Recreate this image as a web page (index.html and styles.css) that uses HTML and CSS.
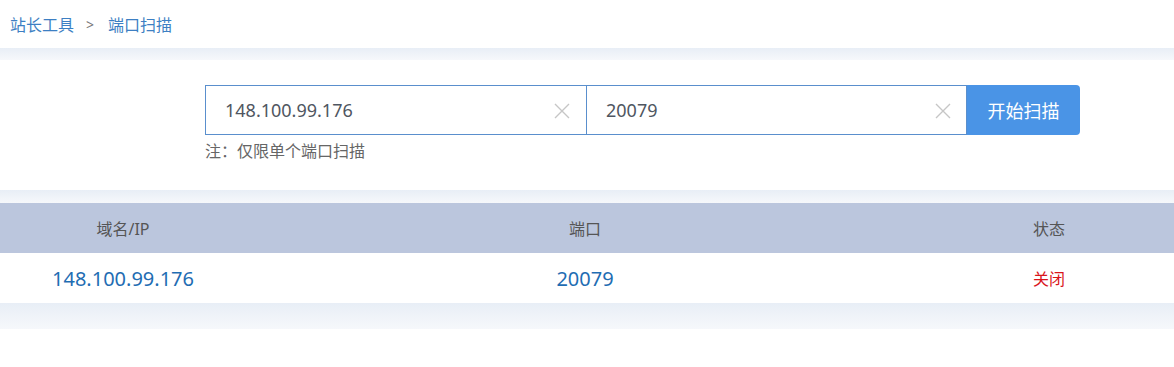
FILE: index.html
```html
<!DOCTYPE html>
<html>
<head>
  <meta charset="utf-8">
  <title>端口扫描</title>
  <link rel="stylesheet" href="styles.css">
</head>
<body>
  <div class="crumb">
    <a href="#">站长工具</a>
    <span class="sep">&gt;</span>
    <a href="#">端口扫描</a>
  </div>
  <div class="band band-top"></div>

  <section class="scan">
    <form class="scan-form">
      <div class="field">
        <input type="text" value="148.100.99.176">
        <svg class="clear" width="16" height="16" viewBox="0 0 16 16"><path d="M1 1L15 15M15 1L1 15"/></svg>
      </div>
      <div class="field field-port">
        <input type="text" value="20079">
        <svg class="clear" width="16" height="16" viewBox="0 0 16 16"><path d="M1 1L15 15M15 1L1 15"/></svg>
      </div>
      <button type="button">开始扫描</button>
    </form>
    <p class="note">注：仅限单个端口扫描</p>
  </section>
  <div class="band band-mid"></div>

  <div class="result">
    <div class="result-head">
      <div>域名/IP</div>
      <div>端口</div>
      <div>状态</div>
    </div>
    <div class="result-row">
      <div class="val">148.100.99.176</div>
      <div class="val">20079</div>
      <div class="status closed">关闭</div>
    </div>
  </div>
  <div class="band band-bottom"></div>
</body>
</html>
```

FILE: styles.css
```css
* {
  box-sizing: border-box;
  margin: 0;
  padding: 0;
}

body {
  font-family: "Noto Sans", "Noto Sans CJK SC", sans-serif;
  background: #fff;
  color: #555;
}

/* breadcrumb */
.crumb {
  height: 48px;
  display: flex;
  align-items: center;
  padding-left: 10px;
  font-size: 16px;
}

.crumb a {
  color: #3d7fc3;
  text-decoration: none;
}

.crumb .sep {
  color: #777;
  font-size: 14px;
  margin: 0 14px 0 12px;
}

.band {
  background: linear-gradient(#e8eef6, #f6f8fb);
}

.band-top { height: 12px; }
.band-mid { height: 13px; }
.band-bottom { height: 26px; }

/* scan form */
.scan {
  height: 130px;
  padding: 25px 0 0 205px;
}

.scan-form {
  display: flex;
  height: 50px;
}

.field {
  position: relative;
  width: 382px;
  height: 50px;
  border: 1px solid #5a8fcd;
  background: #fff;
}

.field-port {
  border-left: none;
  width: 380px;
}

.field input {
  width: 100%;
  height: 100%;
  border: none;
  outline: none;
  padding: 0 50px 0 19px;
  font-family: inherit;
  font-size: 18px;
  color: #4f5661;
  background: transparent;
}

.field .clear {
  position: absolute;
  right: 16px;
  top: 17px;
  fill: none;
  stroke: #c6c6c6;
  stroke-width: 1.4;
}

.field-port .clear {
  right: 15px;
}

.scan-form button {
  width: 113px;
  height: 50px;
  border: none;
  border-radius: 0 4px 4px 0;
  background: #4a94e6;
  color: #fff;
  font-family: inherit;
  font-size: 18px;
  cursor: pointer;
}

.note {
  margin-top: 5px;
  font-size: 16px;
  line-height: 22px;
  color: #666;
}

/* result table */
.result-head,
.result-row {
  display: grid;
  grid-template-columns: 246px 1fr 250px;
  height: 50px;
  align-items: center;
  text-align: center;
}

.result-head {
  background: #bbc6dd;
  font-size: 16px;
  color: #555;
}

.result-row {
  background: #fff;
}

.result-row .val {
  font-size: 20px;
  color: #1f6db3;
}

.status {
  font-size: 16px;
}

.status.closed {
  color: #d9151b;
}
```
